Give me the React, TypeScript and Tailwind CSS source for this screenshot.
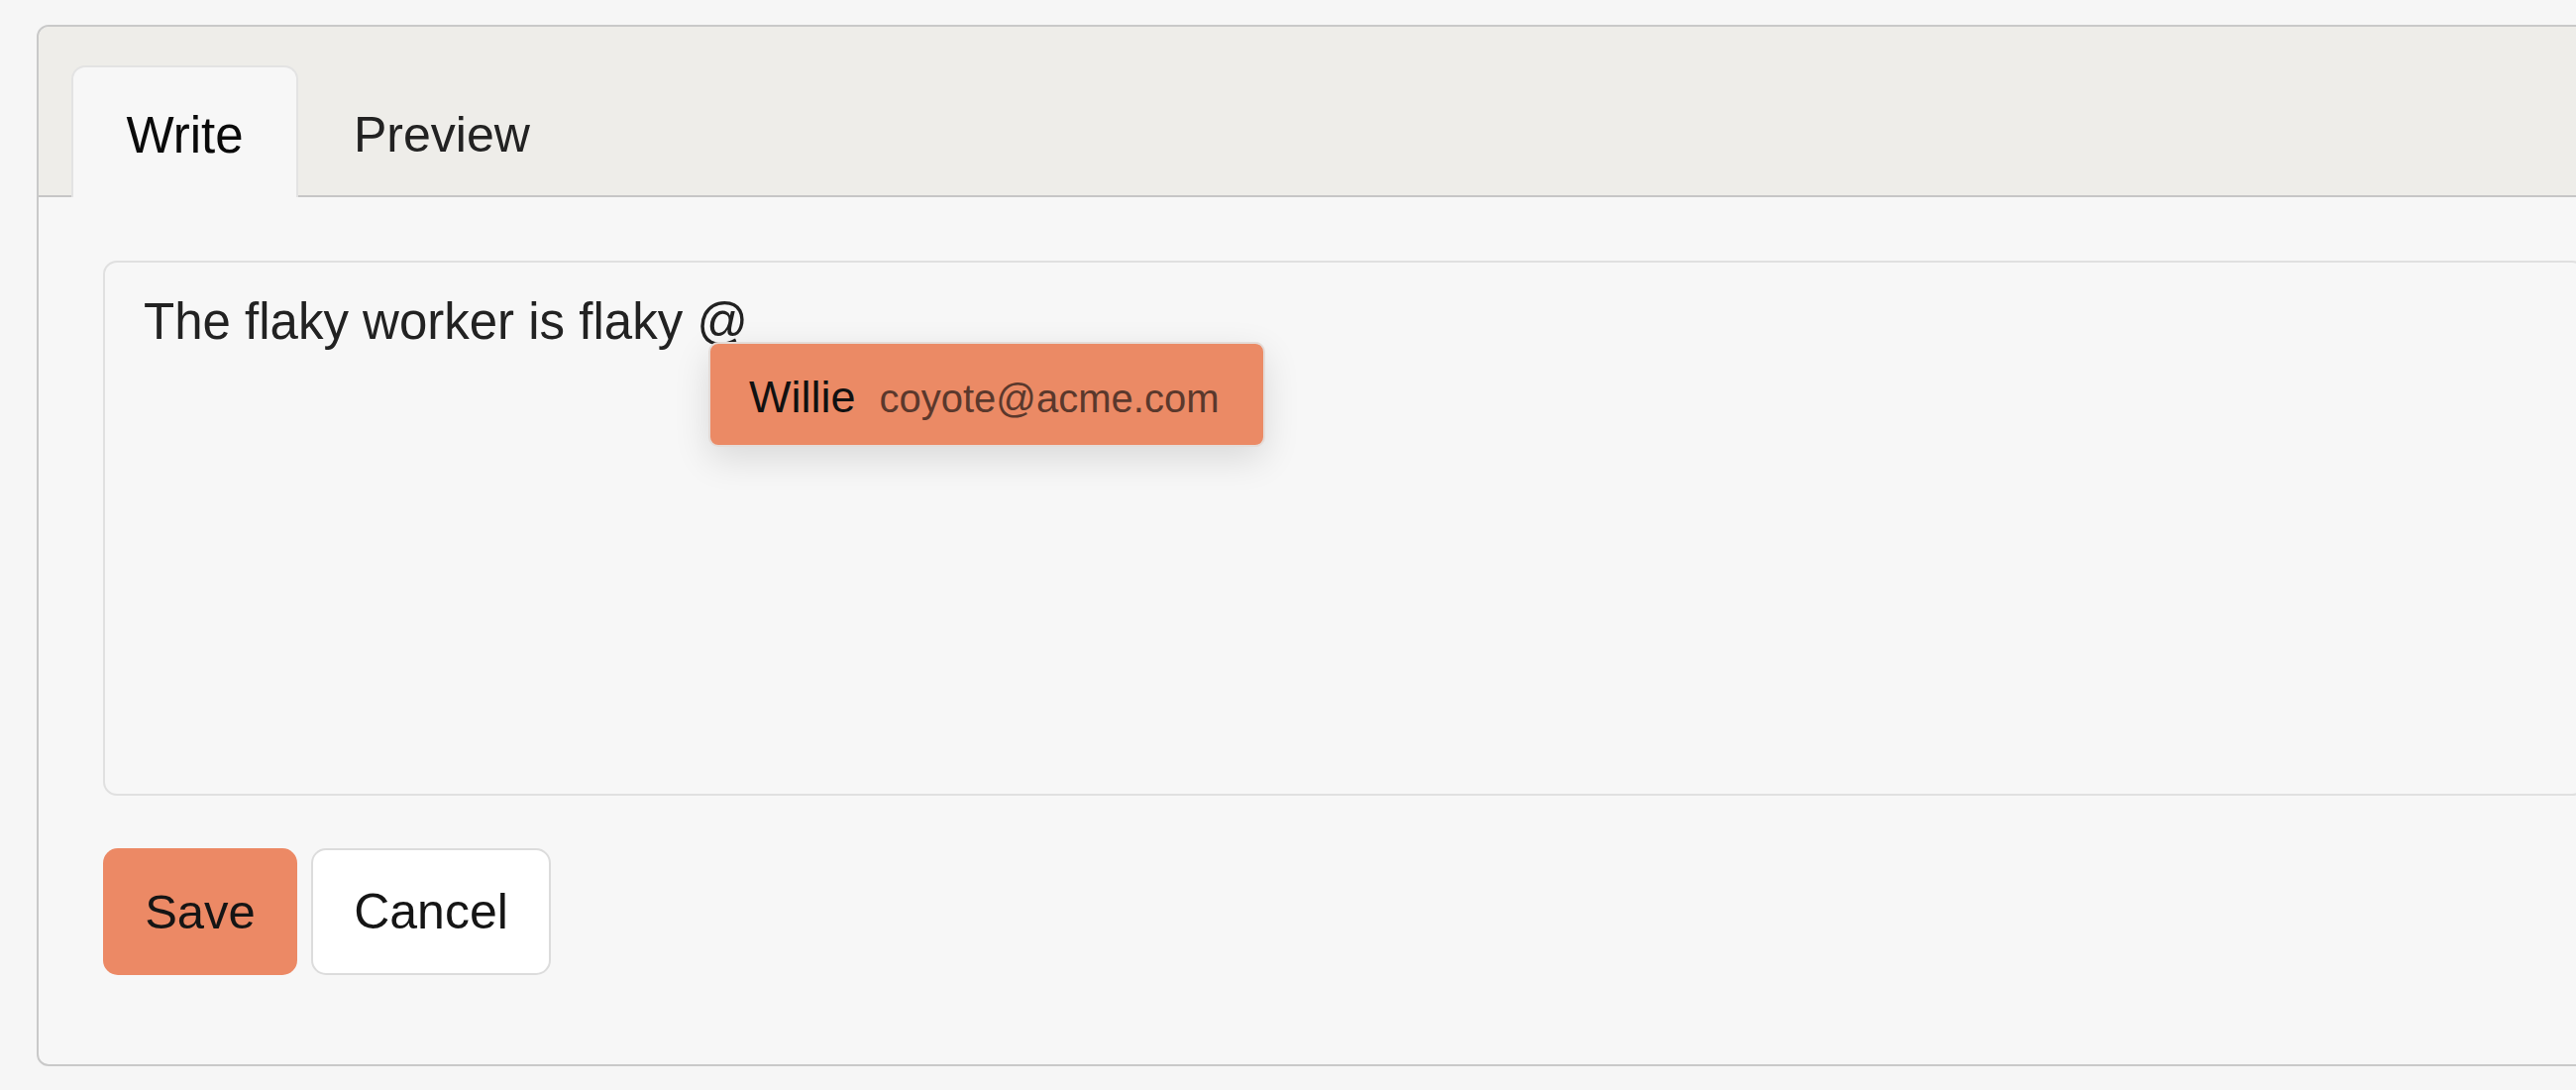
import React from "react";

export default function App() {
  return (
    <div className="w-[2600px] h-[1100px] overflow-hidden bg-[#f6f6f6] pt-[25px] pl-[37px] font-['Liberation_Sans',Arial,sans-serif]">
      <div className="w-[2640px] rounded-[12px] border-2 border-[#c9c9c9] bg-[#f7f7f7] overflow-hidden">
        {/* Header with tabs */}
        <div className="h-[172px] bg-[#eeede9] border-b-2 border-[#c6c6c6] flex items-end pl-[33px] rounded-t-[10px]">
          <div className="w-[229px] h-[133px] -mb-[2px] border-2 border-b-0 border-[#e3e3e3] rounded-t-[14px] bg-[#f7f7f7] flex justify-center pt-[43px] text-[51px] leading-none text-[#0a0a0a]">
            Write
          </div>
          <div className="h-[133px] -mb-[2px] border-2 border-b-0 border-transparent pl-[54px] pr-[54px] flex pt-[43px] text-[50px] leading-none text-[#222]">
            Preview
          </div>
        </div>

        {/* Body */}
        <div className="pl-[65px] pr-[65px] pt-[64px] pb-[90px]">
          <div className="relative h-[540px] border-2 border-[#e0e0e0] rounded-[14px] bg-[#f7f7f7] pl-[39px] pt-[22px] text-[51px] leading-[75px] text-[#222]">
            The flaky worker is flaky @
            <div className="absolute left-[609px] top-[80px] w-[562px] h-[106px] rounded-[10px] border-2 border-[#e4dcd8] bg-[#eb8a65] pl-[39px] pt-[31px] shadow-[0_12px_36px_rgba(0,0,0,0.12)] flex items-baseline gap-[24px] whitespace-nowrap">
              <span className="text-[45px] leading-none text-[#111]">Willie</span>
              <span className="text-[40px] leading-none text-[#5a382c]">coyote@acme.com</span>
            </div>
          </div>

          <div className="flex mt-[53px] gap-[14px]">
            <button className="h-[128px] w-[196px] rounded-[15px] bg-[#ec8965] text-[49px] leading-none text-[#151515] flex items-center justify-center">
              Save
            </button>
            <button className="h-[128px] w-[242px] rounded-[15px] border-2 border-[#dcdcdc] bg-white text-[50px] leading-none text-[#151515] flex items-center justify-center">
              Cancel
            </button>
          </div>
        </div>
      </div>
    </div>
  );
}
